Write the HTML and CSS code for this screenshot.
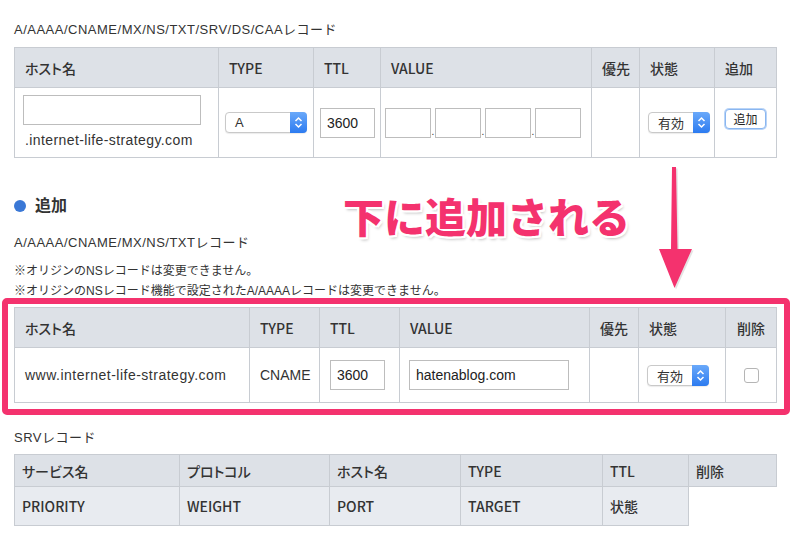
FILE: index.html
```html
<!DOCTYPE html>
<html lang="ja">
<head>
    <meta charset="UTF-8">
    <meta name="viewport" content="width=device-width, initial-scale=1.0">
    <title>DNSレコード設定</title>
    <link rel="stylesheet" href="styles.css">
</head>
<body>
    <p class="record-title">A/AAAA/CNAME/MX/NS/TXT/SRV/DS/CAAレコード</p>
    <table class="dns-table add-table">
        <colgroup>
            <col style="width:204px"><col style="width:95px"><col style="width:67px"><col style="width:211px"><col style="width:48px"><col style="width:75px"><col style="width:62px">
        </colgroup>
        <tr>
            <th>ホスト名</th><th>TYPE</th><th>TTL</th><th>VALUE</th><th>優先</th><th>状態</th><th>追加</th>
        </tr>
        <tr>
            <td>
                <input class="host-input" type="text">
                <div class="domain">.internet-life-strategy.com</div>
            </td>
            <td>
                <div class="mac-select type-select">A<span class="sel-btn"><svg width="9" height="13" viewBox="0 0 9 13"><path d="M1.5 5 L4.5 2 L7.5 5 M1.5 8 L4.5 11 L7.5 8" fill="none" stroke="#fff" stroke-width="1.5"/></svg></span></div>
            </td>
            <td><input class="ttl-input" type="text" value="3600"></td>
            <td>
                <div class="ip-inputs">
                    <input type="text"><span class="dot">.</span><input type="text"><span class="dot">.</span><input type="text"><span class="dot">.</span><input type="text">
                </div>
            </td>
            <td></td>
            <td>
                <div class="mac-select state-select">有効<span class="sel-btn"><svg width="9" height="13" viewBox="0 0 9 13"><path d="M1.5 5 L4.5 2 L7.5 5 M1.5 8 L4.5 11 L7.5 8" fill="none" stroke="#fff" stroke-width="1.5"/></svg></span></div>
            </td>
            <td><button class="add-btn">追加</button></td>
        </tr>
    </table>

    <h3 class="section-head"><span class="bullet"></span>追加</h3>
    <p class="record-title sub">A/AAAA/CNAME/MX/NS/TXTレコード</p>
    <p class="note first">※オリジンのNSレコードは変更できません。</p>
    <p class="note">※オリジンのNSレコード機能で設定されたA/AAAAレコードは変更できません。</p>

    <div class="highlight-box">
        <table class="dns-table list-table">
            <colgroup>
                <col style="width:235px"><col style="width:70px"><col style="width:80px"><col style="width:190px"><col style="width:49px"><col style="width:87px"><col style="width:51px">
            </colgroup>
            <tr>
                <th>ホスト名</th><th>TYPE</th><th>TTL</th><th>VALUE</th><th>優先</th><th>状態</th><th class="center">削除</th>
            </tr>
            <tr>
                <td class="host-name">www.internet-life-strategy.com</td>
                <td class="type-name">CNAME</td>
                <td><input class="ttl-input" type="text" value="3600"></td>
                <td><input class="value-input" type="text" value="hatenablog.com"></td>
                <td></td>
                <td>
                    <div class="mac-select state-select">有効<span class="sel-btn"><svg width="9" height="13" viewBox="0 0 9 13"><path d="M1.5 5 L4.5 2 L7.5 5 M1.5 8 L4.5 11 L7.5 8" fill="none" stroke="#fff" stroke-width="1.5"/></svg></span></div>
                </td>
                <td class="center"><span class="checkbox"></span></td>
            </tr>
        </table>
    </div>

    <p class="record-title srv">SRVレコード</p>
    <table class="dns-table srv-table">
        <colgroup>
            <col style="width:165px"><col style="width:150px"><col style="width:131px"><col style="width:142px"><col style="width:86px"><col style="width:88px">
        </colgroup>
        <tr class="srv-head">
            <th>サービス名</th><th>プロトコル</th><th>ホスト名</th><th>TYPE</th><th>TTL</th><th>削除</th>
        </tr>
        <tr class="srv-sub">
            <th>PRIORITY</th><th>WEIGHT</th><th>PORT</th><th>TARGET</th><th>状態</th>
        </tr>
    </table>

    <!-- 注釈 -->
    <div class="callout">下に追加される</div>
    <svg class="callout-arrow" width="44" height="130" viewBox="0 0 44 130">
        <path d="M17 2 L21 2 L22.5 84 L37 84 L19.5 123 L4 84 L16 84 Z" fill="#c9c9c9" opacity="0.5" transform="translate(1.5 1.5)"/>
        <path d="M17 2 L21 2 L22.5 84 L37 84 L19.5 123 L4 84 L16 84 Z" fill="#f4326e"/>
    </svg>
</body>
</html>
```

FILE: styles.css
```css
body {
    font-family: "Liberation Sans", "Noto Sans CJK JP", sans-serif;
    color: #333;
    background: #fff;
    margin: 0;
    padding: 20px 24px 0 14px;
    position: relative;
}
p {
    margin: 0;
}
.record-title {
    font-size: 13px;
    letter-spacing: 0.5px;
    line-height: 20px;
    margin-bottom: 7px;
}
.record-title.sub {
    margin-top: 17px;
    margin-bottom: 0;
}
.record-title.srv {
    margin-top: 13px;
    margin-bottom: 6px;
}
.note {
    font-size: 12px;
    line-height: 20px;
}
.note.first {
    margin-top: 8px;
}
.dns-table {
    border-collapse: collapse;
    table-layout: fixed;
    width: 762px;
}
.dns-table th,
.dns-table td {
    border: 1px solid #c8ccd2;
    padding: 0 0 0 10px;
    text-align: left;
    vertical-align: middle;
}
.dns-table th {
    background: #dde1e7;
    font-family: "Noto Sans CJK JP", sans-serif;
    font-feature-settings: "palt";
    font-size: 14px;
    font-weight: 500;
    color: #333;
    height: 39px;
}
.dns-table .center {
    text-align: center;
    padding: 0;
}
.add-table td {
    height: 69px;
    font-size: 14px;
}
input {
    font-family: inherit;
    box-sizing: border-box;
    border: 1px solid #bdbdbd;
    height: 30px;
    margin: 0;
    font-size: 14px;
    color: #222;
    padding: 0 6px;
    outline: none;
}
.host-input {
    display: block;
    width: 178px;
    margin: 0 0 5px -2px;
}
.domain {
    line-height: 20px;
    letter-spacing: 0.4px;
}
.ttl-input {
    width: 55px;
}
.add-table .ttl-input {
    margin-left: -4px;
}
.ip-inputs {
    display: flex;
    align-items: flex-end;
    margin-left: -6px;
}
.ip-inputs input {
    width: 46px;
    padding: 0;
}
.dot {
    width: 4px;
    font-size: 10px;
    line-height: 12px;
    text-align: center;
}
.mac-select {
    display: inline-flex;
    align-items: center;
    justify-content: space-between;
    box-sizing: border-box;
    height: 21px;
    border: 1px solid #c9c9c9;
    border-radius: 4px;
    background: #fff;
    font-size: 13px;
    padding-left: 9px;
    vertical-align: middle;
    box-shadow: 0 1px 1px rgba(0,0,0,0.08);
}
.type-select {
    width: 82px;
    margin-left: -4px;
}
.state-select {
    width: 62px;
    margin-left: -2px;
}
.sel-btn {
    width: 17px;
    height: 21px;
    margin: -1px -1px -1px 0;
    border-radius: 0 4px 4px 0;
    background: linear-gradient(#6aa9fa, #2c7bf0);
    display: flex;
    align-items: center;
    justify-content: center;
}
.add-btn {
    font-family: inherit;
    font-size: 12px;
    color: #222;
    background: #fff;
    border: 1px solid #8ab6f0;
    border-radius: 4px;
    box-shadow: 0 0 0 1px #b9d4f7;
    width: 41px;
    height: 20px;
    padding: 0;
    margin: 0 0 8px 0;
}
.section-head {
    margin: 38px 0 0;
    font-size: 16px;
    line-height: 20px;
    display: flex;
    align-items: center;
}
.bullet {
    width: 12px;
    height: 12px;
    border-radius: 50%;
    background: #3a78d6;
    margin-right: 9px;
}
.highlight-box {
    border: 6px solid #f4326e;
    border-radius: 5px;
    padding: 3px 8px 6px 6px;
    margin: -3px 0 0 -12px;
    width: 762px;
}
.list-table th {
    height: 39px;
}
.list-table td {
    height: 54px;
    font-size: 14px;
}
.host-name {
    letter-spacing: 0.5px;
}
.type-name {
    padding-left: 10px;
}
.value-input {
    width: 160px;
    margin-left: -1px;
}
.checkbox {
    display: inline-block;
    width: 13px;
    height: 13px;
    border: 1px solid #b5b5b5;
    border-radius: 3px;
    background: #fff;
    vertical-align: middle;
}
.srv-table th {
    padding-left: 7px;
    height: 31px;
}
.srv-sub th {
    background: #e8ebf0;
    height: 38px;
}
.callout {
    position: absolute;
    left: 343px;
    top: 191px;
    font-family: "Noto Sans CJK JP", sans-serif;
    font-size: 41px;
    font-weight: 900;
    line-height: 48px;
    color: #f4326e;
    letter-spacing: 0;
    text-shadow:
        2px 0 0 #fff, -2px 0 0 #fff, 0 2px 0 #fff, 0 -2px 0 #fff,
        2px 2px 0 #fff, -2px -2px 0 #fff, 2px -2px 0 #fff, -2px 2px 0 #fff,
        2px 3px 3px rgba(0,0,0,0.25);
}
.callout-arrow {
    position: absolute;
    left: 655px;
    top: 165px;
}
```
